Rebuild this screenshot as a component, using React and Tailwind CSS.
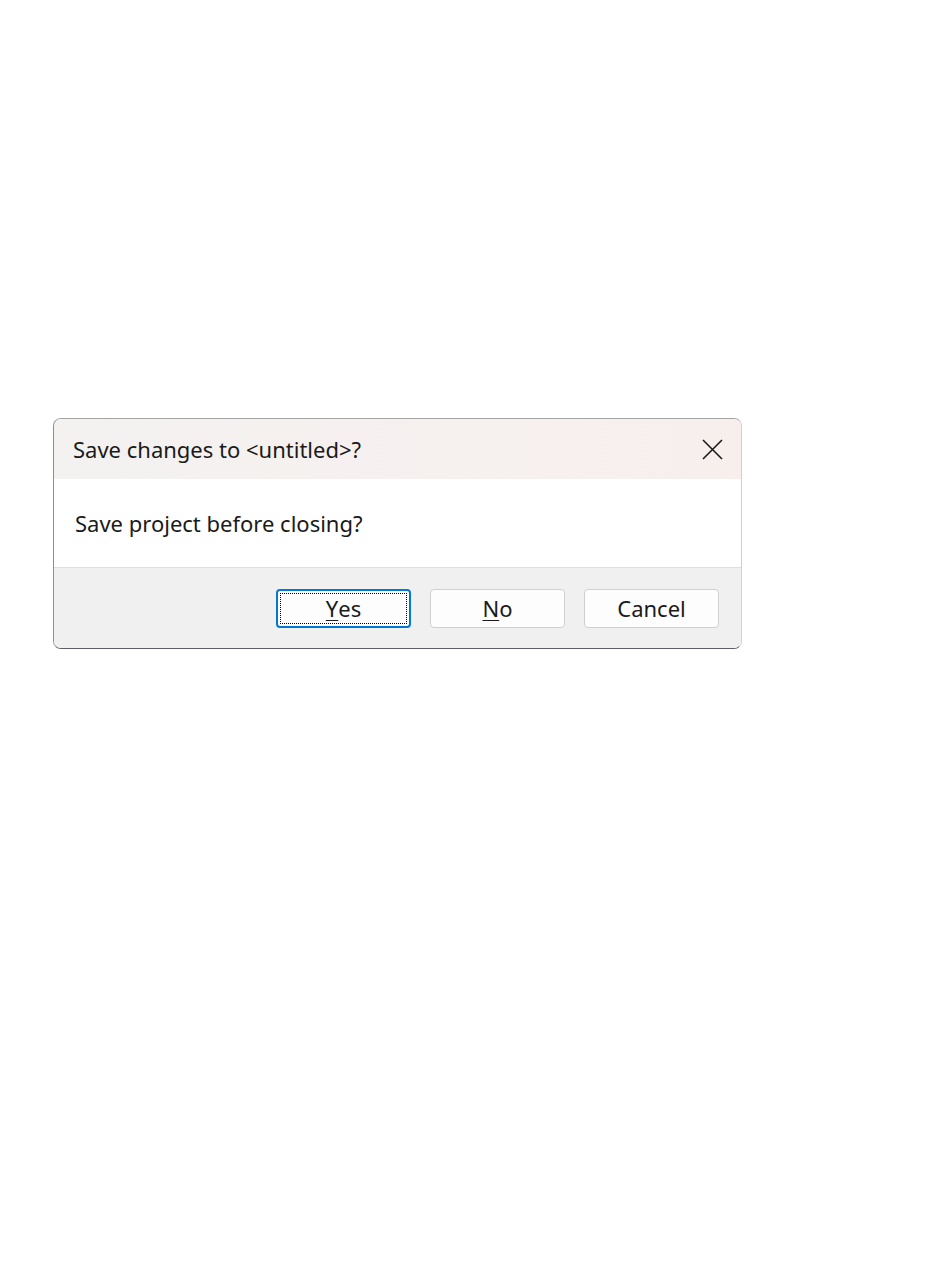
export default function App() {
  const font = { fontFamily: '"Segoe UI", "Noto Sans", "Open Sans", sans-serif' };

  return (
    <div className="min-h-[1276px] bg-white pt-[418px] pl-[53px]" style={font}>
      <div className="w-[689px] overflow-hidden rounded-[8px] border border-t-[#a3a3a3] border-l-[#8e8e8e] border-r-[#cfcfcf] border-b-[#5f5f6b] bg-white">
        {/* Title bar */}
        <div className="flex h-[60px] items-center justify-between bg-gradient-to-r from-[#f3f2f1] to-[#f8efed] pl-[19px] pr-[18px]">
          <span className="text-[22px] leading-none text-[#1a1a1a]">Save changes to &lt;untitled&gt;?</span>
          <svg width="21" height="21" viewBox="0 0 21 21" className="text-[#1a1a1a]">
            <path d="M1 1 L20 20 M20 1 L1 20" stroke="currentColor" strokeWidth="1.6" />
          </svg>
        </div>

        {/* Message */}
        <div className="flex h-[89px] items-center border-b border-[#dedede] pl-[21px]">
          <span className="text-[22px] leading-none text-[#1a1a1a]">Save project before closing?</span>
        </div>

        {/* Buttons */}
        <div className="flex h-[80px] items-center justify-end gap-[19px] bg-[#f0f0f0] pr-[22px]">
          <button className="flex h-[39px] w-[135px] items-center justify-center rounded-[4px] border-2 border-[#0078d4] bg-[#fdfdfd] p-[2px]">
            <span className="flex h-full w-full items-center justify-center border border-dotted border-black text-[22px] text-[#1a1a1a]">
              <span className="underline decoration-1 underline-offset-[3px]">Y</span>es
            </span>
          </button>
          <button className="h-[39px] w-[135px] rounded-[4px] border border-[#d0d0d0] bg-[#fdfdfd] text-[22px] text-[#1a1a1a]">
            <span className="underline decoration-1 underline-offset-[3px]">N</span>o
          </button>
          <button className="h-[39px] w-[135px] rounded-[4px] border border-[#d0d0d0] bg-[#fdfdfd] text-[22px] text-[#1a1a1a]">
            Cancel
          </button>
        </div>
      </div>
    </div>
  );
}
